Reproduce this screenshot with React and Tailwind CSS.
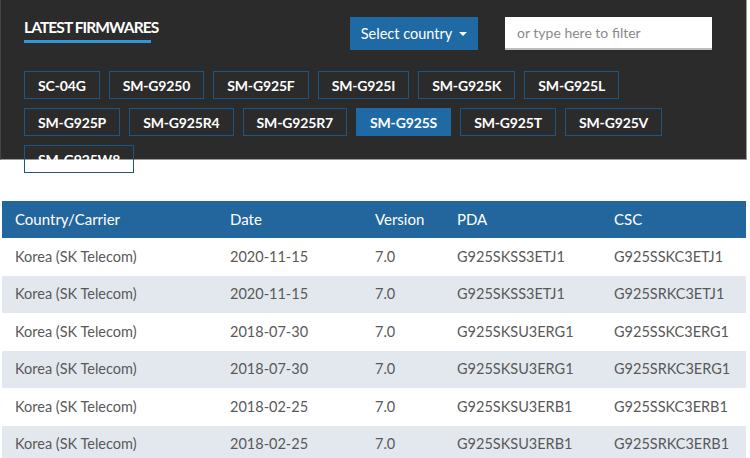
import React from "react";

const row1 = ["SC-04G", "SM-G9250", "SM-G925F", "SM-G925I", "SM-G925K", "SM-G925L"];
const row2 = ["SM-G925P", "SM-G925R4", "SM-G925R7", "SM-G925S", "SM-G925T", "SM-G925V"];
const row3 = ["SM-G925W8"];

const rows = [
  ["Korea (SK Telecom)", "2020-11-15", "7.0", "G925SKSS3ETJ1", "G925SSKC3ETJ1"],
  ["Korea (SK Telecom)", "2020-11-15", "7.0", "G925SKSS3ETJ1", "G925SRKC3ETJ1"],
  ["Korea (SK Telecom)", "2018-07-30", "7.0", "G925SKSU3ERG1", "G925SSKC3ERG1"],
  ["Korea (SK Telecom)", "2018-07-30", "7.0", "G925SKSU3ERG1", "G925SRKC3ERG1"],
  ["Korea (SK Telecom)", "2018-02-25", "7.0", "G925SKSU3ERB1", "G925SSKC3ERB1"],
  ["Korea (SK Telecom)", "2018-02-25", "7.0", "G925SKSU3ERB1", "G925SRKC3ERB1"],
];

function ModelBtn({ name }) {
  const active = name === "SM-G925S";
  return (
    <div
      className={
        "h-[28px] px-[13px] flex items-center border text-[14px] font-bold text-white tracking-[-0.15px] " +
        (active ? "bg-[#1f6aa5] border-[#1f6aa5]" : "border-[#1d5585]")
      }
    >
      {name}
    </div>
  );
}

export default function App() {
  return (
    <div
      className="w-[750px] h-[458px] bg-white overflow-hidden"
      style={{ fontFamily: "Lato, 'Noto Sans', sans-serif" }}
    >
      <div className="w-[747px] h-[160px] bg-[#2b2b2b] border-l border-r border-b border-l-[#444] border-r-[#9a9a9a] border-b-[#9a9a9a] pl-[23px] pt-[17px] relative">
        <div className="flex items-start">
          <div className="w-[326px] -mt-[2px]">
            <div className="inline-block">
              <div className="text-[15.5px] font-bold text-white tracking-[-0.9px] leading-[18px]">
                LATEST FIRMWARES
              </div>
              <div className="mt-[4px] h-[3px] w-[127px] bg-[#3197d8]" />
            </div>
          </div>
          <div className="h-[33px] w-[128px] bg-[#1f6aa5] flex items-center justify-center gap-[7px] text-white text-[14.5px]">
            <span>Select country</span>
            <span className="w-0 h-0 border-l-[4px] border-r-[4px] border-t-[4px] border-l-transparent border-r-transparent border-t-white mt-[1px]" />
          </div>
          <div className="ml-[27px] h-[33px] w-[207px] bg-white border-b-2 border-[#bdbdbd] flex items-center pl-[12px] text-[14px] text-[#8a8a8a]">
            or type here to filter
          </div>
        </div>
        <div className="mt-[21px] flex flex-col gap-[9px]">
          {[row1, row2, row3].map((r, i) => (
            <div key={i} className="flex gap-[9px]">
              {r.map((n) => (
                <ModelBtn key={n} name={n} />
              ))}
            </div>
          ))}
        </div>
      </div>

      <div className="mt-[41px] ml-[2px] w-[744px] text-[14.5px]">
        <div className="grid grid-cols-[215px_145px_82px_157px_1fr] h-[37px] items-center bg-[#23669d] text-white text-[15px]">
          {["Country/Carrier", "Date", "Version", "PDA", "CSC"].map((h) => (
            <div key={h} className="pl-[13px]">{h}</div>
          ))}
        </div>
        {rows.map((r, i) => (
          <div
            key={i}
            className={
              "grid grid-cols-[215px_145px_82px_157px_1fr] h-[37.5px] items-center text-[#595959] " +
              (i % 2 === 1 ? "bg-[#e3e8ee]" : "bg-white")
            }
          >
            {r.map((c, j) => (
              <div key={j} className="pl-[13px]">{c}</div>
            ))}
          </div>
        ))}
      </div>
    </div>
  );
}
